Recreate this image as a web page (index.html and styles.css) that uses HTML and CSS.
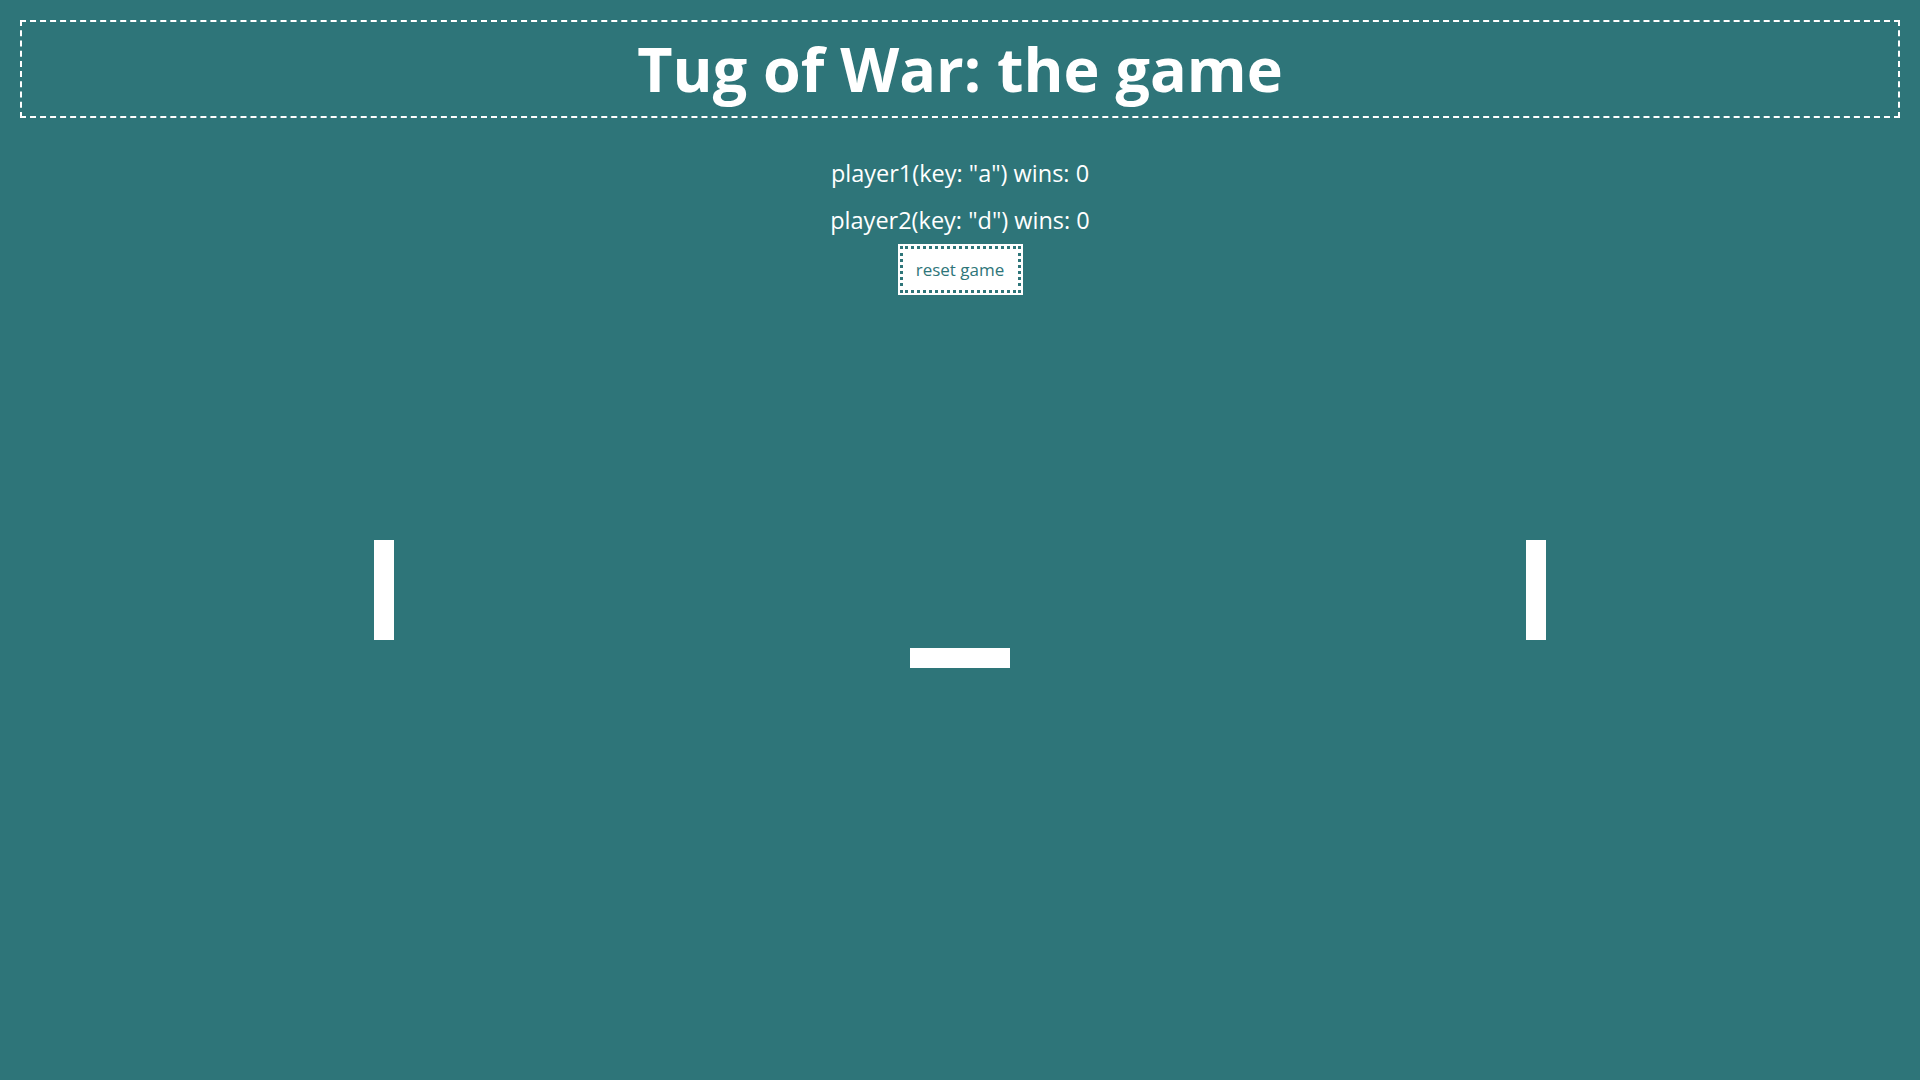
FILE: index.html
```html
<!DOCTYPE html>
<html lang="en">
<head>
<meta charset="utf-8">
<title>Tug of War</title>
<link rel="stylesheet" href="styles.css">
</head>
<body>
  <h1 class="title">Tug of War: the game</h1>
  <div class="scores">
    <p class="score">player1(key: "a") wins: 0</p>
    <p class="score">player2(key: "d") wins: 0</p>
  </div>
  <div class="controls">
    <button class="reset">reset game</button>
  </div>
  <div class="field">
    <div class="post post-left"></div>
    <div class="rope"></div>
    <div class="post post-right"></div>
  </div>
</body>
</html>
```
FILE: styles.css
```css
html, body {
  margin: 0;
  padding: 0;
  background: #2e7579;
  height: 100%;
}
body {
  padding: 20px;
  box-sizing: border-box;
  font-family: "Open Sans", "DejaVu Sans", sans-serif;
  color: #fff;
}
.title {
  margin: 0;
  border: 2px dashed #fff;
  text-align: center;
  font-size: 61px;
  font-weight: 700;
  line-height: 78px;
  padding: 8px 0;
}
.scores {
  margin-top: 32px;
  text-align: center;
}
.score {
  margin: 0;
  font-size: 23.5px;
  line-height: 47px;
}
.controls {
  display: flex;
  justify-content: center;
  margin-top: 2px;
}
.reset {
  background: #fff;
  border: 3px dotted #2e7579;
  box-shadow: 0 0 0 2px #fff;
  color: #2e7579;
  font-family: "Open Sans", "DejaVu Sans", sans-serif;
  font-size: 17px;
  font-weight: 500;
  width: 121px;
  height: 47px;
  padding: 0;
}
.field {
  position: relative;
  height: 560px;
}
.post {
  position: absolute;
  top: 247px;
  width: 20px;
  height: 100px;
  background: #fff;
}
.post-left { left: 354px; }
.post-right { left: 1506px; }
.rope {
  position: absolute;
  top: 355px;
  left: 890px;
  width: 100px;
  height: 20px;
  background: #fff;
}
```
